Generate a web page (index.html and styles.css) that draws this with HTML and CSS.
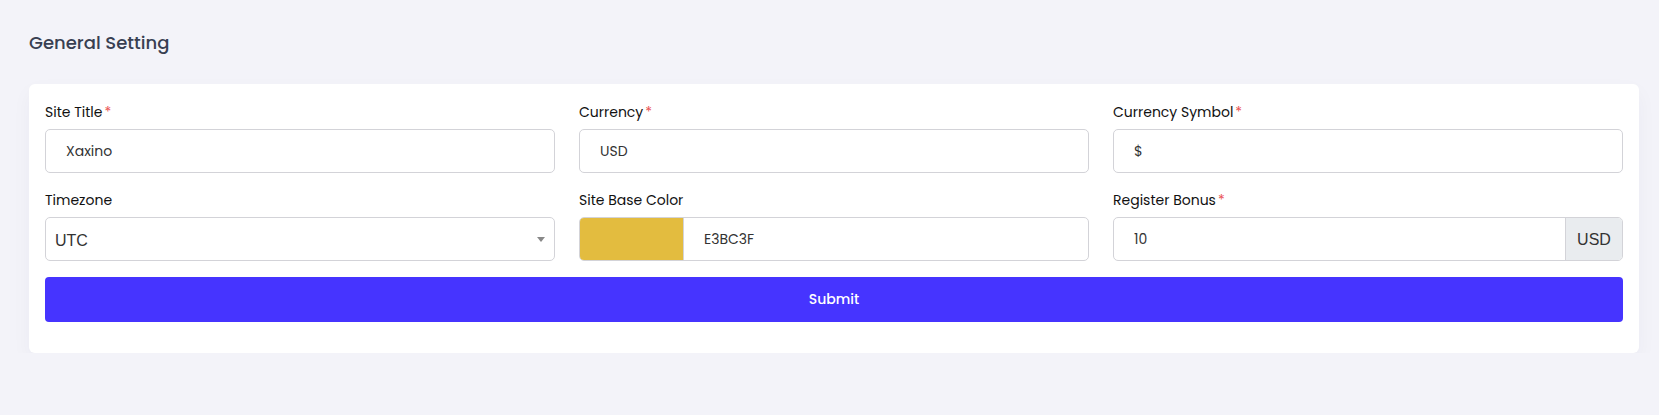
FILE: index.html
```html
<!DOCTYPE html>
<html>
<head>
<meta charset="utf-8">
<link rel="stylesheet" href="styles.css">
</head>
<body>
<main class="page">
  <h1 class="page-title">General Setting</h1>
  <section class="card">
    <form class="form-grid">
      <div class="field">
        <label class="label">Site Title<span class="req">*</span></label>
        <div class="input">Xaxino</div>
      </div>
      <div class="field">
        <label class="label">Currency<span class="req">*</span></label>
        <div class="input">USD</div>
      </div>
      <div class="field">
        <label class="label">Currency Symbol<span class="req">*</span></label>
        <div class="input">$</div>
      </div>
      <div class="field">
        <label class="label">Timezone</label>
        <div class="input select"><span class="select-text">UTC</span><span class="caret"></span></div>
      </div>
      <div class="field">
        <label class="label">Site Base Color</label>
        <div class="input color-group"><span class="swatch"></span><span class="color-text">E3BC3F</span></div>
      </div>
      <div class="field">
        <label class="label">Register Bonus<span class="req">*</span></label>
        <div class="input addon-group"><span class="addon-text">10</span><span class="addon">USD</span></div>
      </div>
      <button type="button" class="submit">Submit</button>
    </form>
  </section>
</main>
</body>
</html>
```

FILE: styles.css
```css
* { box-sizing: border-box; }
html, body { margin: 0; }
body {
  background: #f3f3f9;
  font-family: "Poppins", "Inter", "Open Sans", sans-serif;
  color: #222;
}
.page {
  padding: 29px 20px 0 29px;
}
.page-title {
  margin: 0 0 28px;
  font-size: 18px;
  line-height: 27px;
  font-weight: 500;
  color: #383f52;
}
.card {
  background: #fff;
  border-radius: 6px;
  box-shadow: 0 8px 20px rgba(30, 30, 80, 0.04);
  padding: 18px 16px 31px;
}
.form-grid {
  display: grid;
  grid-template-columns: repeat(3, 1fr);
  column-gap: 24px;
  row-gap: 17px;
}
.field { display: flex; flex-direction: column; }
.label {
  font-size: 14px;
  line-height: 21px;
  font-weight: 400;
  color: #111;
  margin-bottom: 6px;
}
.req { color: #ea5455; margin-left: 2px; }
.input {
  height: 44px;
  border: 1px solid #d3d3d8;
  border-radius: 5px;
  display: flex;
  align-items: center;
  padding: 0 20px;
  font-size: 14px;
  color: #333;
  background: #fff;
}
.select { padding: 0 9px; justify-content: space-between; }
.select-text { font-family: "Liberation Sans", Arial, sans-serif; font-size: 16px; color: #333; padding-top: 3px; }
.caret {
  width: 0; height: 0;
  border-left: 4px solid transparent;
  border-right: 4px solid transparent;
  border-top: 5px solid #888;
}
.color-group { padding: 0; overflow: hidden; }
.swatch { width: 104px; height: 100%; background: #e3bc3f; border-right: 1px solid #d3d3d8; }
.color-text { padding-left: 20px; }
.addon-group { padding: 0 0 0 20px; overflow: hidden; }
.addon-text { flex: 1; padding-top: 1px; }
.addon {
  height: 100%;
  width: 57px;
  display: flex;
  align-items: center;
  justify-content: center;
  padding-top: 2px;
  background: #e9ecef;
  border-left: 1px solid #d3d3d8;
  font-family: "Liberation Sans", Arial, sans-serif;
  font-size: 16px;
  color: #333;
}
.submit {
  grid-column: 1 / -1;
  margin-top: -1px;
  height: 45px;
  border: 0;
  border-radius: 4px;
  background: #4634ff;
  color: #fff;
  font-family: inherit;
  font-size: 14px;
  font-weight: 500;
}
```
